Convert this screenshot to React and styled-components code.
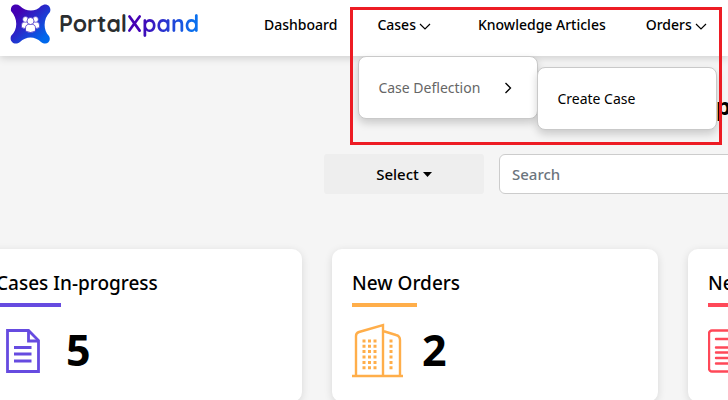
import React from "react";
import styled, { createGlobalStyle } from "styled-components";

const GlobalStyle = createGlobalStyle`
  *, *::before, *::after { box-sizing: border-box; }
  body {
    margin: 0;
    background: #f5f5f5;
    color: #000;
    font-family: "Noto Sans", "Open Sans", sans-serif;
    font-size: 14px;
    overflow: hidden;
  }
`;

const Page = styled.div`
  position: relative;
  min-height: 100vh;
  overflow: hidden;
`;

const Header = styled.header`
  position: relative;
  z-index: 2;
  display: flex;
  align-items: flex-start;
  gap: 66px;
  height: 56px;
  padding-left: 10px;
  background: #fff;
  box-shadow: 0 2px 8px rgba(0, 0, 0, 0.16);
`;

const Brand = styled.a`
  display: flex;
  flex: none;
  align-items: center;
  gap: 8px;
  width: 188px;
  height: 48px;
  color: #2b2e30;
  font: 700 23px/32px Quicksand, Lato, sans-serif;
  text-decoration: none;
  svg { flex: none; }
`;

const BrandAccent = styled.span`
  background: linear-gradient(100deg, #4400b4, #4400b4 20%, #0b70ee 90%);
  background-clip: text;
  color: transparent;
`;

const Nav = styled.nav`
  display: flex;
  gap: 40px;
  white-space: nowrap;
`;

const NavItem = styled.div`
  position: relative;
  display: flex;
  height: 50px;
  padding-right: ${(p) => (p.$wide ? "7px" : "0")};
`;

const NavLink = styled.a`
  display: flex;
  align-items: center;
  gap: 3px;
  color: #000;
  font-weight: 500;
  line-height: 20px;
  text-decoration: none;
  svg { margin-top: 3px; }
`;

const Menu = styled.div`
  position: absolute;
  top: ${(p) => (p.$nested ? "10px" : "56px")};
  left: ${(p) => (p.$nested ? "178px" : "-19px")};
  width: 180px;
  border: 1px solid #c9c9c9;
  border-radius: 8px;
  background: #fff;
  box-shadow: 0 4px 8px rgba(0, 0, 0, 0.18);
`;

const MenuLink = styled.a`
  display: flex;
  align-items: center;
  justify-content: space-between;
  height: 61px;
  padding: 0 23px 0 19px;
  color: ${(p) => (p.$muted ? "#666" : "#000")};
  font-size: 14px;
  font-weight: 400;
  line-height: 20px;
  text-decoration: none;
  svg { color: #000; }
`;

const Title = styled.h1`
  margin: 32px 0 0 716px;
  font-size: 24px;
  font-weight: 700;
  line-height: 36px;
`;

const Filters = styled.form`
  display: flex;
  gap: 15px;
  margin: 30px 0 0 324px;
`;

const SelectButton = styled.button`
  display: flex;
  flex: none;
  align-items: center;
  justify-content: center;
  gap: 4px;
  width: 160px;
  height: 40px;
  border: 0;
  border-radius: 3px;
  background: #eee;
  color: #000;
  font: 500 15px/24px "Noto Sans", sans-serif;
`;

const SearchInput = styled.input`
  flex: none;
  width: 400px;
  height: 40px;
  padding: 0 12px;
  border: 1px solid #ccc;
  border-radius: 6px;
  background: #fff;
  font: 500 15px/24px "Noto Sans", sans-serif;
  &::placeholder { color: #6c757d; opacity: 1; }
`;

const Cards = styled.main`
  display: grid;
  grid-auto-flow: column;
  grid-auto-columns: 326px;
  gap: 30px;
  margin: 55px 0 0 -24px;
`;

const Card = styled.section`
  padding: 20px 20px 22px;
  border-radius: 10px;
  background: #fff;
  box-shadow: 0 2px 8px rgba(0, 0, 0, 0.12);
`;

const CardTitle = styled.h2`
  margin: 0;
  font-size: 19px;
  font-weight: 500;
  line-height: 28px;
  &::after {
    content: "";
    display: block;
    width: 65px;
    height: 4px;
    margin-top: 6px;
    background: ${(p) => p.$color};
  }
`;

const Stat = styled.div`
  display: flex;
  align-items: center;
  gap: 18px;
  min-height: 60px;
  margin-top: 13px;
  color: ${(p) => p.$color};
`;

const Value = styled.span`
  color: #000;
  font-size: 43px;
  font-weight: 700;
  line-height: 60px;
`;

const Highlight = styled.div`
  position: absolute;
  z-index: 5;
  top: 7px;
  left: 350px;
  width: 372px;
  height: 138px;
  border: 3px solid #ed1c24;
  pointer-events: none;
`;

const Person = ({ x, y, s }) => (
  <g transform={`translate(${x} ${y}) scale(${s})`} fill="#fff" stroke="#3920c4" strokeWidth="0.7">
    <path d="M-5 8V5Q-5 1 0 1Q5 1 5 5V8Q0 11-5 8Z" />
    <circle cx="0" cy="-2" r="3.5" />
  </g>
);

const LogoMark = () => (
  <svg width="41" height="40" viewBox="0 0 41 40" aria-hidden="true">
    <defs>
      <linearGradient id="mark" x1="0" y1="0" x2="1" y2="1">
        <stop offset="0.2" stopColor="#4300b3" />
        <stop offset="0.85" stopColor="#0068ec" />
      </linearGradient>
    </defs>
    <path
      d="M1 7C0 1 6-1 10 2C16 8 26 8 31 2C36-2 42 2 40 8C33 15 33 26 39 32C42 38 36 42 31 38C25 32 16 32 10 38C5 42-1 38 1 32C8 25 8 15 1 7Z"
      fill="url(#mark)"
    />
    <Person x={15.5} y={17} s={0.8} />
    <Person x={25.5} y={17} s={0.8} />
    <Person x={20.5} y={19} s={1} />
  </svg>
);

const ChevronDown = () => (
  <svg width="12" height="8" viewBox="0 0 12 8" fill="none" stroke="currentColor" strokeWidth="1.2" aria-hidden="true">
    <path d="M1 1L6 6L11 1" />
  </svg>
);

const ChevronRight = () => (
  <svg width="12" height="12" viewBox="0 0 12 12" fill="none" stroke="currentColor" strokeWidth="1.3" aria-hidden="true">
    <path d="M3.5 1L8.5 6L3.5 11" />
  </svg>
);

const Caret = () => (
  <svg width="9" height="5" viewBox="0 0 9 5" fill="currentColor" aria-hidden="true">
    <path d="M0 0H9L4.5 5Z" />
  </svg>
);

const FileIcon = () => (
  <svg width="52" height="56" viewBox="0 0 52 56" fill="none" stroke="currentColor" strokeWidth="2.8" aria-hidden="true">
    <path d="M11.5 8.5H32.5L42.5 18.5V49.5H11.5Z" />
    <path d="M32.5 8.5V19H42.5M18 25.5H35.5M18 32H35.5M18 39H35.5" />
  </svg>
);

const BuildingIcon = () => (
  <svg width="52" height="56" viewBox="0 0 52 56" fill="none" stroke="currentColor" strokeWidth="2.4" aria-hidden="true">
    <path d="M0 54H51M4 54V14Q4 11 7 10L31 3V54M31 9L44 13Q48 14 48 18V54" />
    {[19, 24.3, 29.6, 35, 40.4, 45.8].map((y) => (
      <path key={y} d={`M10.5 ${y}H13.5M16 ${y}H19M21.5 ${y}H24.5M37.5 ${y}H40.5`} strokeWidth="3" />
    ))}
  </svg>
);

const ArticleIcon = () => (
  <svg width="52" height="56" viewBox="0 0 52 56" fill="none" stroke="currentColor" strokeWidth="2.4" aria-hidden="true">
    <rect x="1" y="8.5" width="49" height="41" rx="3" />
    <path d="M8 17H44M8 25.5H44M8 30.5H44M8 36H44M8 41.5H44" strokeLinecap="round" />
  </svg>
);

const stats = [
  { title: "Cases In-progress", color: "#664be0", Icon: FileIcon, value: "5" },
  { title: "New Orders", color: "#ffae4a", Icon: BuildingIcon, value: "2" },
  { title: "Ne", color: "#ff4858", Icon: ArticleIcon, value: "" },
];

export default function App() {
  return (
    <Page>
      <GlobalStyle />
      <Header>
        <Brand href="#">
          <LogoMark />
          <span>
            Portal<BrandAccent>Xpand</BrandAccent>
          </span>
        </Brand>
        <Nav>
          <NavItem>
            <NavLink href="#">Dashboard</NavLink>
          </NavItem>
          <NavItem $wide>
            <NavLink href="#">
              Cases <ChevronDown />
            </NavLink>
            <Menu>
              <MenuLink href="#" $muted>
                Case Deflection <ChevronRight />
              </MenuLink>
              <Menu $nested>
                <MenuLink href="#">Create Case</MenuLink>
              </Menu>
            </Menu>
          </NavItem>
          <NavItem>
            <NavLink href="#">Knowledge Articles</NavLink>
          </NavItem>
          <NavItem $wide>
            <NavLink href="#">
              Orders <ChevronDown />
            </NavLink>
          </NavItem>
        </Nav>
      </Header>
      <Title>p</Title>
      <Filters>
        <SelectButton type="button">
          Select <Caret />
        </SelectButton>
        <SearchInput type="search" placeholder="Search" aria-label="Search" />
      </Filters>
      <Cards>
        {stats.map(({ title, color, Icon, value }) => (
          <Card key={title}>
            <CardTitle $color={color}>{title}</CardTitle>
            <Stat $color={color}>
              <Icon />
              <Value>{value}</Value>
            </Stat>
          </Card>
        ))}
      </Cards>
      <Highlight />
    </Page>
  );
}
